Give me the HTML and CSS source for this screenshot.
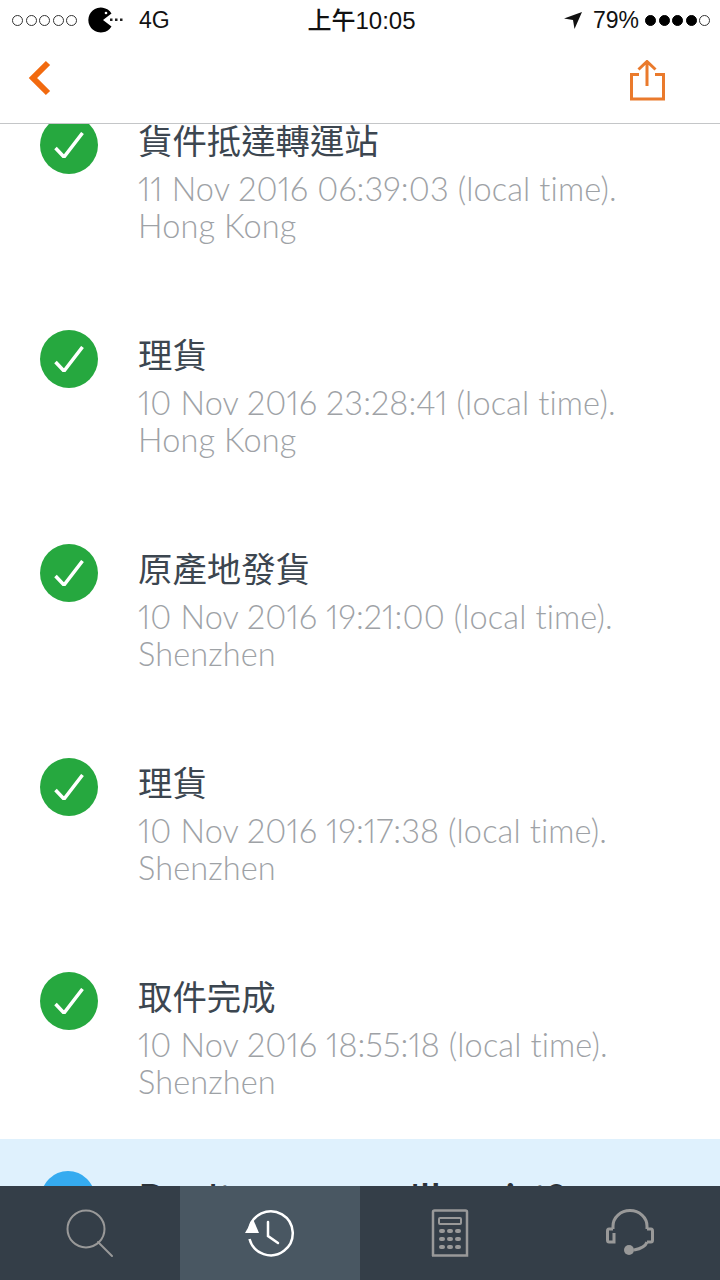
FILE: index.html
```html
<!DOCTYPE html>
<html>
<head>
    <meta name="viewport" content="width=device-width, initial-scale=1" charset="utf-8">
    <title>Tracking</title>
    <link rel="stylesheet" href="styles.css">
</head>
<body>
<div class="screen">
    <div class="status-bar">
        <div class="status-left">
            <div class="signal">
                <span class="dot"></span><span class="dot"></span><span class="dot"></span><span class="dot"></span><span class="dot"></span>
            </div>
            <svg class="pacman" width="36" height="26" viewBox="0 0 36 26">
                <path d="M23.500 6.500A12.500 12.500 0 1 0 23.500 19.500L15 13Z" fill="#000"/>
                <circle cx="18" cy="6" r="1.300" fill="#fff"/>
                <rect x="22" y="11.500" width="2.500" height="2.500" fill="#222"/>
                <rect x="27" y="11.500" width="2.500" height="2.500" fill="#222"/>
                <rect x="32" y="11.500" width="2.500" height="2.500" fill="#222"/>
            </svg>
            <span class="network">4G</span>
        </div>
        <div class="clock">上午10:05</div>
        <div class="status-right">
            <svg width="18" height="18" viewBox="0 0 18 18"><path d="M18 1L10.500 18L9 9L0 7.500Z" fill="#111"/></svg>
            <span class="battery">79%</span>
            <div class="signal">
                <span class="dot on"></span><span class="dot on"></span><span class="dot on"></span><span class="dot on"></span><span class="dot"></span>
            </div>
        </div>
    </div>
    <div class="top-bar">
        <svg width="24" height="36" viewBox="0 0 24 36"><path d="M20 3L5 18L20 33" fill="none" stroke="#f26a0f" stroke-width="6"/></svg>
        <svg width="36" height="42" viewBox="0 0 36 42"><path d="M10 14.500H2.500V39H34.500V14.500H26M18 26V2M9.500 9.500L18 1.500L26.500 9.500" fill="none" stroke="#ea7a2c" stroke-width="3"/></svg>
    </div>
    <div class="list-area">
        <div class="list">
            <div class="row">
                <div class="check"><svg width="30" height="26" viewBox="0 0 30 26"><path d="M1.500 16L10 25L28.500 1" fill="none" stroke="#fff" stroke-width="3.500"/></svg></div>
                <div class="info">
                    <div class="title">貨件抵達轉運站</div>
                    <div class="detail">11 Nov 2016 06:39:03 (local time).</div>
                    <div class="detail">Hong Kong</div>
                </div>
            </div>
            <div class="row">
                <div class="check"><svg width="30" height="26" viewBox="0 0 30 26"><path d="M1.500 16L10 25L28.500 1" fill="none" stroke="#fff" stroke-width="3.500"/></svg></div>
                <div class="info">
                    <div class="title">理貨</div>
                    <div class="detail">10 Nov 2016 23:28:41 (local time).</div>
                    <div class="detail">Hong Kong</div>
                </div>
            </div>
            <div class="row">
                <div class="check"><svg width="30" height="26" viewBox="0 0 30 26"><path d="M1.500 16L10 25L28.500 1" fill="none" stroke="#fff" stroke-width="3.500"/></svg></div>
                <div class="info">
                    <div class="title">原產地發貨</div>
                    <div class="detail">10 Nov 2016 19:21:00 (local time).</div>
                    <div class="detail">Shenzhen</div>
                </div>
            </div>
            <div class="row">
                <div class="check"><svg width="30" height="26" viewBox="0 0 30 26"><path d="M1.500 16L10 25L28.500 1" fill="none" stroke="#fff" stroke-width="3.500"/></svg></div>
                <div class="info">
                    <div class="title">理貨</div>
                    <div class="detail">10 Nov 2016 19:17:38 (local time).</div>
                    <div class="detail">Shenzhen</div>
                </div>
            </div>
            <div class="row">
                <div class="check"><svg width="30" height="26" viewBox="0 0 30 26"><path d="M1.500 16L10 25L28.500 1" fill="none" stroke="#fff" stroke-width="3.500"/></svg></div>
                <div class="info">
                    <div class="title">取件完成</div>
                    <div class="detail">10 Nov 2016 18:55:18 (local time).</div>
                    <div class="detail">Shenzhen</div>
                </div>
            </div>
            <div class="row help-row">
                <div class="help-circle"></div>
                <div class="info">
                    <div class="title help-title">Don't worry, we'll assist?</div>
                </div>
            </div>
        </div>
    </div>
    <div class="tab-bar">
        <div class="tab">
            <svg width="50" height="50" viewBox="0 0 50 50" fill="none" stroke="#999" stroke-width="2"><circle cx="21" cy="21" r="18.500"/><path d="M33 34L47 48" stroke-linecap="round"/></svg>
        </div>
        <div class="tab tab-active">
            <svg width="50" height="50" viewBox="0 0 50 50" fill="none" stroke="#fff" stroke-width="2.500"><path d="M4 22A22 22 0 1 1 4.500 31"/><path d="M23 14V28L33 35" stroke-linecap="round"/><path d="M8 11L0 25H14Z" fill="#fff" stroke="none"/></svg>
        </div>
        <div class="tab">
            <svg width="38" height="48" viewBox="0 0 38 48" fill="none" stroke="#999" stroke-width="2.500">
                <path d="M2 47V3Q2 1.500 3.500 1.500H34.500Q36 1.500 36 3V46.500H1"/>
                <rect x="8" y="9" width="22" height="6" rx="1" stroke-width="2"/>
                <g fill="#999" stroke="none">
                    <rect x="8" y="20" width="6" height="4" rx="2"/><rect x="16" y="20" width="6" height="4" rx="2"/><rect x="24" y="20" width="6" height="4" rx="2"/>
                    <rect x="8" y="28" width="6" height="4" rx="2"/><rect x="16" y="28" width="6" height="4" rx="2"/><rect x="24" y="28" width="6" height="4" rx="2"/>
                    <rect x="8" y="36" width="6" height="4" rx="2"/><rect x="16" y="36" width="6" height="4" rx="2"/><rect x="24" y="36" width="6" height="4" rx="2"/>
                </g>
            </svg>
        </div>
        <div class="tab">
            <svg width="48" height="48" viewBox="0 0 48 48" fill="none" stroke="#999" stroke-width="3">
                <path d="M7 20V17A17 15.500 0 0 1 41 17V20"/>
                <path d="M7 20H3Q1.500 20 1.500 22V31Q1.500 33 3 33H8V24"/>
                <path d="M41 20H45Q46.500 20 46.500 22V31Q46.500 33 45 33H41"/>
                <path d="M41 33Q39 39 28 41"/>
                <circle cx="23" cy="41" r="5" fill="#999" stroke="none"/>
            </svg>
        </div>
    </div>
</div>
</body>
</html>
```

FILE: styles.css
```css
body {
    margin: 0;
    font-family: Lato, "Noto Sans CJK TC", sans-serif;
    background-color: white;
}

.screen {
    width: 720px;
    height: 1280px;
    display: flex;
    flex-direction: column;
    overflow: hidden;
}

.status-bar {
    height: 40px;
    flex-shrink: 0;
    display: flex;
    align-items: center;
    justify-content: space-between;
    padding: 0 10px 0 12px;
    box-sizing: border-box;
    font-family: "Liberation Sans", "Noto Sans CJK TC", sans-serif;
    font-size: 23px;
    color: #111;
    position: relative;
}

.status-left, .status-right {
    display: flex;
    align-items: center;
}

.signal {
    display: flex;
    gap: 2.500px;
}

.dot {
    width: 9px;
    height: 9px;
    border: 1px solid #333;
    border-radius: 50%;
    display: block;
}

.dot.on {
    background-color: #000;
    border-color: #000;
}

.pacman {
    margin-left: 11px;
}

.network {
    margin-left: 15px;
}

.clock {
    position: absolute;
    left: 3px;
    right: 0;
    margin-top: -3px;
    text-align: center;
    font-size: 24px;
    font-weight: 500;
}

.battery {
    margin: 0 6px 0 11px;
}

.top-bar {
    height: 84px;
    flex-shrink: 0;
    box-sizing: border-box;
    display: flex;
    align-items: flex-start;
    justify-content: space-between;
    padding: 20px 55px 0 28px;
    border-bottom: 1px solid #c4c6c8;
}

.list-area {
    flex: 1;
    min-height: 0;
    overflow: hidden;
}

.list {
    margin-top: -8px;
}

.row {
    height: 214px;
    display: flex;
    padding-left: 40px;
}

.check {
    width: 58px;
    height: 58px;
    border-radius: 50%;
    background-color: #26a83f;
    display: flex;
    align-items: center;
    justify-content: center;
    flex-shrink: 0;
}

.info {
    margin-left: 40px;
}

.title {
    font-size: 34.400px;
    line-height: 50px;
    margin-bottom: 4px;
    color: #3c4650;
}

.detail {
    font-size: 32.500px;
    font-weight: 300;
    font-variant-numeric: proportional-nums;
    letter-spacing: 0.120px;
    line-height: 37px;
    color: #9ea2a6;
    white-space: nowrap;
}

.help-row {
    background-color: #dff1fd;
    padding-top: 32px;
    margin-top: -47px;
}

.help-circle {
    width: 54px;
    height: 54px;
    margin-left: 1px;
    margin-right: 4px;
    border-radius: 50%;
    background-color: #35abf0;
    flex-shrink: 0;
}

.help-title {
    color: #2c333a;
    font-weight: 700;
    letter-spacing: 2px;
    margin-top: 0;
    white-space: nowrap;
}

.tab-bar {
    height: 94px;
    flex-shrink: 0;
    display: flex;
    background-color: #343e48;
}

.tab {
    width: 180px;
    display: flex;
    align-items: center;
    justify-content: center;
}

.tab-active {
    background-color: #495762;
}
```
